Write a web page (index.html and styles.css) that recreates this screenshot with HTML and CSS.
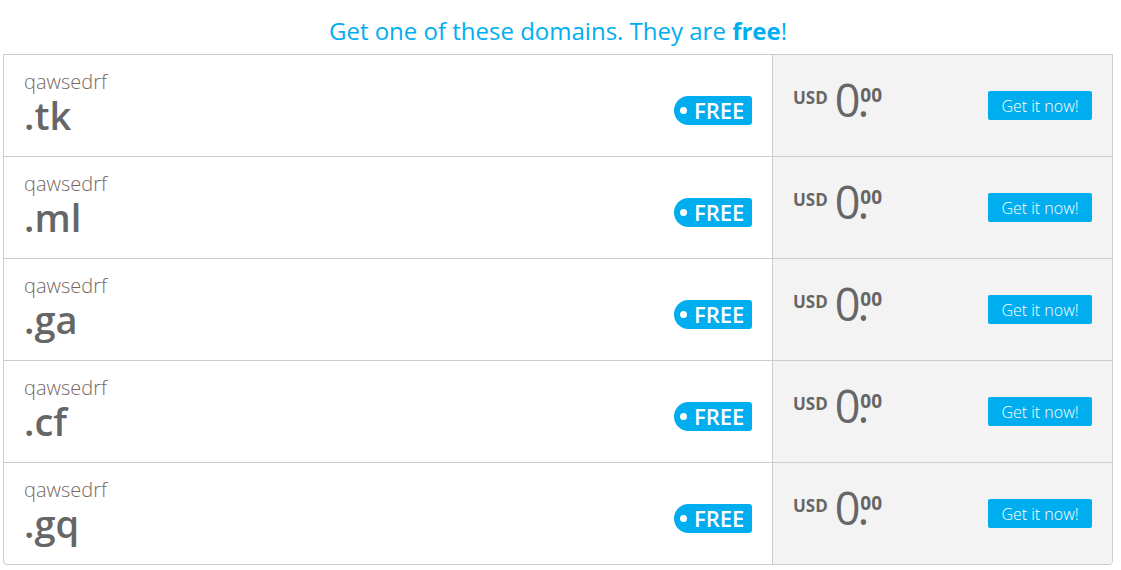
FILE: index.html
```html
<!DOCTYPE html>
<html>
<head>
<meta charset="utf-8">
<link rel="stylesheet" href="styles.css">
</head>
<body>
<div class="page">
  <h2 class="title">Get one of these domains. They are <b>free</b>!</h2>
  <div class="list">
    <div class="row">
      <div class="domain">
        <div class="names"><div class="sld">qawsedrf</div><div class="tld">.tk</div></div>
        <span class="badge"><span class="dot"></span>FREE</span>
      </div>
      <div class="price">
        <div class="amount"><span class="cur">USD</span><span class="int">0.</span><span class="dec">00</span></div>
        <button class="btn">Get it now!</button>
      </div>
    </div>
    <div class="row">
      <div class="domain">
        <div class="names"><div class="sld">qawsedrf</div><div class="tld">.ml</div></div>
        <span class="badge"><span class="dot"></span>FREE</span>
      </div>
      <div class="price">
        <div class="amount"><span class="cur">USD</span><span class="int">0.</span><span class="dec">00</span></div>
        <button class="btn">Get it now!</button>
      </div>
    </div>
    <div class="row">
      <div class="domain">
        <div class="names"><div class="sld">qawsedrf</div><div class="tld">.ga</div></div>
        <span class="badge"><span class="dot"></span>FREE</span>
      </div>
      <div class="price">
        <div class="amount"><span class="cur">USD</span><span class="int">0.</span><span class="dec">00</span></div>
        <button class="btn">Get it now!</button>
      </div>
    </div>
    <div class="row">
      <div class="domain">
        <div class="names"><div class="sld">qawsedrf</div><div class="tld">.cf</div></div>
        <span class="badge"><span class="dot"></span>FREE</span>
      </div>
      <div class="price">
        <div class="amount"><span class="cur">USD</span><span class="int">0.</span><span class="dec">00</span></div>
        <button class="btn">Get it now!</button>
      </div>
    </div>
    <div class="row">
      <div class="domain">
        <div class="names"><div class="sld">qawsedrf</div><div class="tld">.gq</div></div>
        <span class="badge"><span class="dot"></span>FREE</span>
      </div>
      <div class="price">
        <div class="amount"><span class="cur">USD</span><span class="int">0.</span><span class="dec">00</span></div>
        <button class="btn">Get it now!</button>
      </div>
    </div>
  </div>
</div>
</body>
</html>
```
FILE: styles.css
```css
* { box-sizing: border-box; }
html, body { margin: 0; padding: 0; background: #fff; }
body { font-family: "Open Sans", "Liberation Sans", sans-serif; color: #666; }
.page { padding: 0 8px 0 3px; }
.title {
  margin: 0;
  height: 54px;
  padding-top: 15px;
  text-align: center;
  font-size: 24px;
  line-height: 32px;
  font-weight: 400;
  color: #00aeef;
}
.title b { font-weight: 700; }
.list {
  border: 1px solid #ccc;
  border-radius: 0 0 4px 4px;
  overflow: hidden;
}
.row {
  display: flex;
  height: 102px;
  border-top: 1px solid #ccc;
}
.row:first-child { height: 101px; border-top: 0; }
.domain {
  width: 769px;
  display: flex;
  align-items: flex-start;
  justify-content: space-between;
  padding: 15px 20px 0 20px;
  border-right: 1px solid #ccc;
}
.sld {
  font-size: 20px;
  font-weight: 300;
  line-height: 24px;
  color: #75675f;
}
.tld {
  font-size: 38px;
  font-weight: 600;
  line-height: 40px;
  color: #666;
  margin-top: 1px;
}
.badge {
  margin-top: 26px;
  display: flex;
  align-items: center;
  height: 29px;
  width: 78px;
  background: #00aeef;
  border-radius: 15px 3px 3px 15px;
  color: #fff;
  font-size: 22px;
  font-weight: 600;
  line-height: 29px;
  padding-left: 6px;
}
.dot {
  width: 7px;
  height: 7px;
  border-radius: 50%;
  background: #fff;
  margin-right: 7px;
}
.price {
  flex: 1;
  background: #f3f3f3;
  display: flex;
  align-items: flex-start;
  justify-content: space-between;
  padding: 19px 20px 0 20px;
}
.amount { display: flex; align-items: flex-start; color: #666; }
.cur { font-size: 17px; font-weight: 700; line-height: 20px; margin-top: 14px; margin-right: 7px; }
.int { font-size: 45px; font-weight: 400; line-height: 52px; letter-spacing: -3px; }
.dec { font-size: 19px; font-weight: 700; line-height: 22px; margin-top: 10px; margin-left: -6px; }
.btn {
  margin-top: 17px;
  width: 104px;
  height: 29px;
  border: 0;
  border-radius: 2px;
  background: #00aeef;
  color: #fff;
  font-family: "Open Sans", "Liberation Sans", sans-serif;
  font-size: 16px;
  font-weight: 300;
  padding: 0;
}
```
